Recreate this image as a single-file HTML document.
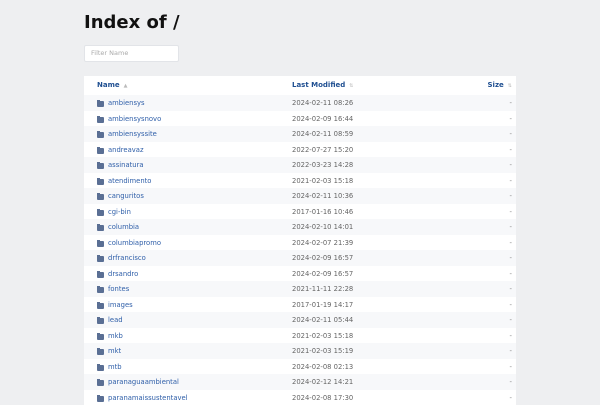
<!DOCTYPE html>
<html><head><meta charset="utf-8"><style>
body{margin:0;background:#eeeff1;font-family:"DejaVu Sans","Liberation Sans",sans-serif;width:600px;height:400px;overflow:hidden;position:relative}
h1{position:absolute;left:84px;top:12px;margin:0;font-size:18px;font-weight:bold;color:#111}
.f{position:absolute;left:84px;top:45px;width:95px;height:17px;background:#fff;border:1px solid #e2e4e8;box-sizing:border-box;border-radius:2px;font-size:6.5px;color:#aaa;line-height:15px;padding-left:6px}
.t{position:absolute;left:84px;top:76px;width:432px;background:#fff}
.h{height:19px;position:relative;font-size:7px;font-weight:bold;color:#1f4f91}
.h span{position:absolute;top:5px}
.r{height:15.5px;position:relative;font-size:6.8px}
.r:nth-child(even){background:#f7f8fa}
.r .n{position:absolute;left:24px;top:4px;color:#2e5ea8}
.r .d{position:absolute;left:208px;top:4px;color:#666}
.r .s{position:absolute;right:4px;top:4px;color:#888}
.r i{position:absolute;left:13px;top:6px;width:7px;height:6px;background:#5a6f94;border-radius:1px}
.r i:before{content:"";position:absolute;left:0;top:-1px;width:3px;height:2px;background:#5a6f94}
.ar{color:#bbb;font-weight:normal;font-size:5px}
</style></head><body>
<h1>Index of /</h1>
<div class="f">Filter Name</div>
<div class="t">
<div class="h"><span style="left:13px">Name <span class="ar" style="position:static">&nbsp;▲</span></span><span style="left:208px">Last Modified <span class="ar" style="position:static">&nbsp;⇅</span></span><span style="right:4px">Size <span class="ar" style="position:static">&nbsp;⇅</span></span></div>
<div class="r"><i></i><span class="n">ambiensys</span><span class="d">2024-02-11 08:26</span><span class="s">-</span></div>
<div class="r"><i></i><span class="n">ambiensysnovo</span><span class="d">2024-02-09 16:44</span><span class="s">-</span></div>
<div class="r"><i></i><span class="n">ambiensyssite</span><span class="d">2024-02-11 08:59</span><span class="s">-</span></div>
<div class="r"><i></i><span class="n">andreavaz</span><span class="d">2022-07-27 15:20</span><span class="s">-</span></div>
<div class="r"><i></i><span class="n">assinatura</span><span class="d">2022-03-23 14:28</span><span class="s">-</span></div>
<div class="r"><i></i><span class="n">atendimento</span><span class="d">2021-02-03 15:18</span><span class="s">-</span></div>
<div class="r"><i></i><span class="n">canguritos</span><span class="d">2024-02-11 10:36</span><span class="s">-</span></div>
<div class="r"><i></i><span class="n">cgi-bin</span><span class="d">2017-01-16 10:46</span><span class="s">-</span></div>
<div class="r"><i></i><span class="n">columbia</span><span class="d">2024-02-10 14:01</span><span class="s">-</span></div>
<div class="r"><i></i><span class="n">columbiapromo</span><span class="d">2024-02-07 21:39</span><span class="s">-</span></div>
<div class="r"><i></i><span class="n">drfrancisco</span><span class="d">2024-02-09 16:57</span><span class="s">-</span></div>
<div class="r"><i></i><span class="n">drsandro</span><span class="d">2024-02-09 16:57</span><span class="s">-</span></div>
<div class="r"><i></i><span class="n">fontes</span><span class="d">2021-11-11 22:28</span><span class="s">-</span></div>
<div class="r"><i></i><span class="n">images</span><span class="d">2017-01-19 14:17</span><span class="s">-</span></div>
<div class="r"><i></i><span class="n">lead</span><span class="d">2024-02-11 05:44</span><span class="s">-</span></div>
<div class="r"><i></i><span class="n">mkb</span><span class="d">2021-02-03 15:18</span><span class="s">-</span></div>
<div class="r"><i></i><span class="n">mkt</span><span class="d">2021-02-03 15:19</span><span class="s">-</span></div>
<div class="r"><i></i><span class="n">mtb</span><span class="d">2024-02-08 02:13</span><span class="s">-</span></div>
<div class="r"><i></i><span class="n">paranaguaambiental</span><span class="d">2024-02-12 14:21</span><span class="s">-</span></div>
<div class="r"><i></i><span class="n">paranamaissustentavel</span><span class="d">2024-02-08 17:30</span><span class="s">-</span></div>
</div>
</body></html>
